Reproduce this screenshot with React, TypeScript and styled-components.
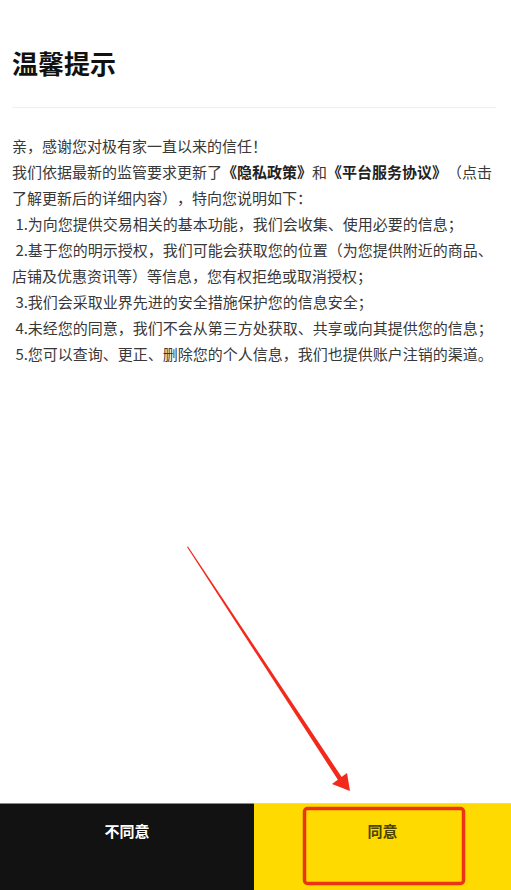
import React from 'react'
import styled, { createGlobalStyle } from 'styled-components'

const GlobalStyle = createGlobalStyle`
    html, body {
        margin: 0;
        padding: 0;
        background: #ffffff;
    }
    body {
        font-family: "Noto Sans CJK SC", "Noto Sans", "Liberation Sans", sans-serif;
        text-spacing-trim: space-all;
    }
`

const Page = styled.div`
    position: relative;
    display: flex;
    flex-direction: column;
    height: 890px;
    width: 511px;
    overflow: hidden;
`

const Header = styled.div`
    margin: 0 15px 0 12px;
    padding: 45px 0 26px;
    border-bottom: 1px solid #efefef;
`

const Title = styled.h1`
    margin: 0;
    font-size: 26px;
    line-height: 36px;
    font-weight: 700;
    color: #111111;
`

const Content = styled.div`
    padding: 25px 12px 0 12px;
    font-size: 15px;
    line-height: 26px;
    color: #383838;
`

const Line = styled.p`
    margin: 0;
    white-space: pre-wrap;
    text-spacing-trim: space-all;
`

const Strong = styled.b`
    font-weight: 700;
    color: #222222;
`

const Footer = styled.div`
    margin-top: auto;
    display: grid;
    grid-template-columns: 254px 1fr;
    height: 87px;
`

const FooterButton = styled.button<{ $primary?: boolean }>`
    border: none;
    border-top: 1px solid ${p => (p.$primary ? '#ffdf33' : '#8a8a8a')};
    margin: 0;
    padding: 12px 0 0;
    display: flex;
    justify-content: center;
    align-items: flex-start;
    font-family: inherit;
    font-size: 15px;
    line-height: 30px;
    font-weight: 700;
    background: ${p => (p.$primary ? '#ffda00' : '#121212')};
    color: ${p => (p.$primary ? '#4d4400' : '#ffffff')};
`

const Annotation = styled.svg`
    position: absolute;
    left: 0;
    top: 0;
    pointer-events: none;
`

const items = [
    ' 1.为向您提供交易相关的基本功能，我们会收集、使用必要的信息；',
    ' 2.基于您的明示授权，我们可能会获取您的位置（为您提供附近的商品、店铺及优惠资讯等）等信息，您有权拒绝或取消授权；',
    ' 3.我们会采取业界先进的安全措施保护您的信息安全；',
    ' 4.未经您的同意，我们不会从第三方处获取、共享或向其提供您的信息；',
    ' 5.您可以查询、更正、删除您的个人信息，我们也提供账户注销的渠道。',
]

export default function App(): React.ReactElement {
    return <>
        <GlobalStyle />
        <Page>
            <Header>
                <Title>温馨提示</Title>
            </Header>
            <Content>
                <Line>亲，感谢您对极有家一直以来的信任！</Line>
                <Line>
                    我们依据最新的监管要求更新了<Strong>《隐私政策》</Strong>和<Strong>《平台服务协议》</Strong>（点击了解更新后的详细内容），特向您说明如下：
                </Line>
                {items.map((item) => <Line key={item}>{item}</Line>)}
            </Content>
            <Footer>
                <FooterButton>不同意</FooterButton>
                <FooterButton $primary>同意</FooterButton>
            </Footer>
            {/* red annotation drawn over the screenshot */}
            <Annotation width="511" height="890" viewBox="0 0 511 890">
                <polygon points="187,547 188,546.5 343,779 339,781.5" fill="#f2291b" />
                <polygon points="350,791 332,784 347,773" fill="#f2291b" />
                <rect x="304.5" y="808.5" width="159" height="75" rx="3" fill="none" stroke="#ec3313" strokeWidth="3.5" />
            </Annotation>
        </Page>
    </>
}
